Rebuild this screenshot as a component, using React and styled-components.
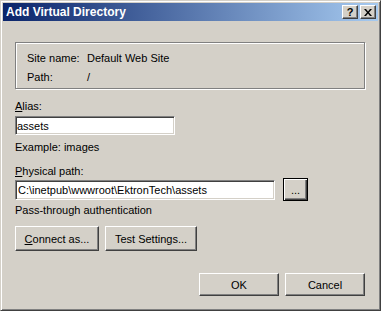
import React from "react";
import styled, { createGlobalStyle } from "styled-components";

const Global = createGlobalStyle`
  body {
    margin: 0;
    background: #d4d0c8;
    font-family: "Liberation Sans", Arial, sans-serif;
    font-size: 11px;
    color: #000;
  }
`;

const Window = styled.div`
  width: 381px;
  height: 311px;
  box-sizing: border-box;
  background: #d4d0c8;
  border: 1px solid;
  border-color: #d4d0c8 #404040 #404040 #d4d0c8;
  box-shadow: inset 1px 1px 0 #fff, inset -1px -1px 0 #808080;
  padding: 2px;
  display: flex;
  flex-direction: column;
`;

const TitleBar = styled.div`
  height: 18px;
  display: flex;
  align-items: center;
  padding: 0 2px 0 3px;
  background: linear-gradient(to right, #0a246a, #a6caf0);
`;

const Title = styled.span`
  flex: 1;
  color: #fff;
  font-weight: bold;
  font-size: 12px;
`;

const CaptionButton = styled.div`
  width: 16px;
  height: 14px;
  box-sizing: border-box;
  margin-left: ${(p) => (p.$gap ? "2px" : "0")};
  background: #d4d0c8;
  border: 1px solid;
  border-color: #fff #404040 #404040 #fff;
  box-shadow: inset -1px -1px 0 #808080;
  display: flex;
  align-items: center;
  justify-content: center;
  font-weight: bold;
  font-size: 11px;
  line-height: 12px;
`;

const Content = styled.div`
  flex: 1;
  padding: 21px 13px 0 12px;
  display: flex;
  flex-direction: column;
`;

const GroupBox = styled.div`
  height: 47px;
  box-sizing: border-box;
  border: 1px solid #808080;
  box-shadow: inset 1px 1px 0 #fff, 1px 1px 0 #fff;
  padding: 7px 0 0 11px;
  display: grid;
  grid-template-columns: 60px 1fr;
  line-height: 17px;
`;

const Label = styled.div`
  line-height: 14px;
  margin-top: ${(p) => p.$top || 0}px;
`;

const TextField = styled.input`
  display: block;
  box-sizing: border-box;
  width: ${(p) => p.$w}px;
  height: ${(p) => p.$h}px;
  margin: ${(p) => p.$top || 0}px 0 0 0;
  padding: 0 0 0 ${(p) => p.$pad || 0}px;
  font: inherit;
  color: #000;
  background: #fff;
  border: 1px solid;
  border-color: #808080 #fff #fff #808080;
  box-shadow: inset 1px 1px 0 #404040, inset -1px -1px 0 #d4d0c8;
  outline: none;
`;

const PathRow = styled.div`
  display: flex;
  align-items: center;
  gap: 8px;
  height: 23px;
`;

const Button = styled.button`
  box-sizing: border-box;
  width: ${(p) => p.$w}px;
  height: ${(p) => p.$h}px;
  padding: 0;
  font: inherit;
  color: #000;
  background: #d4d0c8;
  border: 1px solid;
  border-color: ${(p) =>
    p.$default ? "#000" : "#fff #404040 #404040 #fff"};
  box-shadow: ${(p) =>
    p.$default
      ? "inset 1px 1px 0 #fff, inset -1px -1px 0 #404040, inset -2px -2px 0 #808080"
      : "inset -1px -1px 0 #808080"};
`;

const ButtonRow = styled.div`
  display: flex;
  gap: ${(p) => p.$gap}px;
  margin-top: ${(p) => p.$top}px;
  justify-content: ${(p) => (p.$end ? "flex-end" : "flex-start")};
`;

const CloseGlyph = () => (
  <svg width="8" height="7" viewBox="0 0 8 7">
    <path d="M0 0h2l2 2.5L6 0h2L5 3.5 8 7H6L4 4.5 2 7H0l3-3.5z" fill="#000" />
  </svg>
);

export default function App() {
  return (
    <>
      <Global />
      <Window>
        <TitleBar>
          <Title>Add Virtual Directory</Title>
          <CaptionButton>?</CaptionButton>
          <CaptionButton $gap>
            <CloseGlyph />
          </CaptionButton>
        </TitleBar>
        <Content>
          <GroupBox>
            <span>Site name:</span>
            <span>Default Web Site</span>
            <span>Path:</span>
            <span>/</span>
          </GroupBox>

          <Label $top={10}>
            <u>A</u>lias:
          </Label>
          <TextField $w={160} $h={19} $top={3} $pad={1} value="assets" readOnly />
          <Label $top={5}>Example: images</Label>

          <Label $top={10}>
            <u>P</u>hysical path:
          </Label>
          <PathRow>
            <TextField
              $w={260}
              $h={20}
              $pad={2}
              value="C:\inetpub\wwwroot\EktronTech\assets"
              readOnly
            />
            <Button $w={25} $h={23} $default>
              ...
            </Button>
          </PathRow>
          <Label $top={2}>Pass-through authentication</Label>

          <ButtonRow $gap={6} $top={9}>
            <Button $w={84} $h={25}>
              <u>C</u>onnect as...
            </Button>
            <Button $w={92} $h={25}>
              Test Settin<u>g</u>s...
            </Button>
          </ButtonRow>

          <ButtonRow $gap={6} $top={22} $end>
            <Button $w={80} $h={23}>
              OK
            </Button>
            <Button $w={80} $h={23}>
              Cancel
            </Button>
          </ButtonRow>
        </Content>
      </Window>
    </>
  );
}
